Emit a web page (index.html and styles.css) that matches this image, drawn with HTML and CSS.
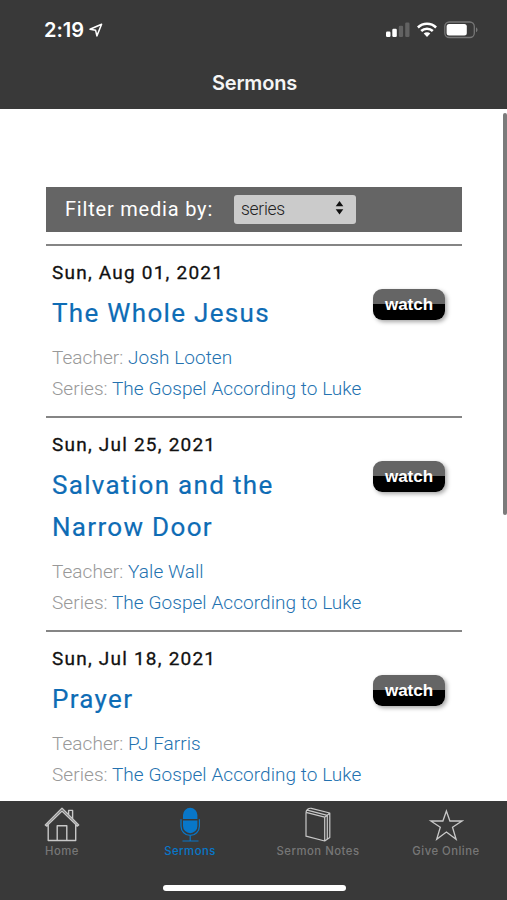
FILE: index.html
```html
<!DOCTYPE html>
<html lang="en">
<head>
<meta charset="utf-8">
<title>Sermons</title>
<link rel="stylesheet" href="styles.css">
</head>
<body>
<div class="app">
  <header class="header">
    <div class="status">
      <div class="clock"><span class="time">2:19</span>
        <svg class="location" width="14" height="14" viewBox="0 0 14 14"><path d="M12.6 1.2 1 6.3 6.6 7.3 7.9 12.9Z" fill="none" stroke="#fff" stroke-width="1.5" stroke-linejoin="round"/></svg>
      </div>
      <div class="indicators">
        <svg width="24" height="16" viewBox="0 0 24 16"><g fill="#fff"><rect x="0" y="9.5" width="4.5" height="5.5" rx="1.2"/><rect x="6.3" y="6.8" width="4.5" height="8.2" rx="1.2"/></g><g fill="#626262"><rect x="12.8" y="3.7" width="4.3" height="11.3" rx="1.2"/><rect x="19.2" y="0.6" width="4.3" height="14.4" rx="1.2"/></g></svg>
        <svg width="20" height="16" viewBox="0 0 20 16"><g fill="none" stroke="#fff" stroke-width="2.5"><path d="M.9 5.5a13 13 0 0 1 18.2 0"/><path d="M4.2 9a8.3 8.3 0 0 1 11.6 0"/></g><path d="M6.7 11.6a4.7 4.7 0 0 1 6.6 0L10 15Z" fill="#fff"/></svg>
        <svg width="34" height="18" viewBox="0 0 34 18"><rect x=".8" y="1" width="29.5" height="15.5" rx="4.5" fill="none" stroke="#777" stroke-width="1.3"/><rect x="2.6" y="3" width="20.2" height="11.6" rx="2.5" fill="#fff"/><path d="M32 6.5c2 .7 2 4 0 4.7Z" fill="#777"/></svg>
      </div>
    </div>
    <h1 class="page-title">Sermons</h1>
  </header>
  <main class="content">
    <div class="filter">
      <span class="filter-label">Filter media by:</span>
      <div class="select"><span class="select-value">series</span>
        <svg width="9" height="14" viewBox="0 0 9 14"><path d="M4.5 0 8.3 5.3H.7ZM4.5 13.5.7 8.2h7.6Z" fill="#111"/></svg>
      </div>
    </div>
    <article class="sermon">
      <div class="details">
        <p class="date">Sun, Aug 01, 2021</p>
        <h2 class="title">The Whole Jesus</h2>
        <p class="meta">Teacher: <a>Josh Looten</a></p>
        <p class="meta">Series: <a class="series">The Gospel According to Luke</a></p>
      </div>
      <button class="watch">watch</button>
    </article>
    <article class="sermon">
      <div class="details">
        <p class="date">Sun, Jul 25, 2021</p>
        <h2 class="title">Salvation and the<br>Narrow Door</h2>
        <p class="meta">Teacher: <a>Yale Wall</a></p>
        <p class="meta">Series: <a class="series">The Gospel According to Luke</a></p>
      </div>
      <button class="watch">watch</button>
    </article>
    <article class="sermon">
      <div class="details">
        <p class="date">Sun, Jul 18, 2021</p>
        <h2 class="title">Prayer</h2>
        <p class="meta">Teacher: <a>PJ Farris</a></p>
        <p class="meta">Series: <a class="series">The Gospel According to Luke</a></p>
      </div>
      <button class="watch">watch</button>
    </article>
    <div class="scrollbar"></div>
  </main>
  <footer class="footer">
    <nav class="tabs">
      <a class="tab">
        <svg width="36" height="36" viewBox="0 0 36 36" fill="none" stroke="#c8c8c8" stroke-width="1.4" stroke-linejoin="round"><path d="M4.2 16.8V33.5H31.7V16.8M18 1.2 1.3 17.9 2.6 19 18 3.9 33.4 19 34.7 17.9ZM13.2 33.3V18.7H22.8V33.3M24.6 7.4V3.4h4v8"/></svg>
        <span>Home</span>
      </a>
      <a class="tab active">
        <svg width="36" height="36" viewBox="0 0 36 36"><path d="M11 12V8a7.2 7.2 0 0 1 14.4 0v4ZM11 13.5H25.4V19a7.2 7.2 0 0 1-14.4 0Z" fill="#0877c9"/><path d="M9 12.2v7a9.2 9.2 0 0 0 18.4 0v-7M18.2 28.5v5.2M10.5 34h16" fill="none" stroke="#0877c9" stroke-width="1.2"/></svg>
        <span>Sermons</span>
      </a>
      <a class="tab">
        <svg width="36" height="36" viewBox="0 0 36 36" fill="none" stroke="#c8c8c8" stroke-width="1.2" stroke-linejoin="round"><path d="M6 5.4 24.7 10.2V34L6 29.2ZM6 5.4C6.2 2.7 8.5 1 11.3 1.3L29.8 6V30.5L24.7 34M7.3 3.2 27.3 8.3V32.2M24.7 10.2l2.6-1.9L29.8 6"/></svg>
        <span>Sermon Notes</span>
      </a>
      <a class="tab">
        <svg width="36" height="36" viewBox="0 0 36 36" fill="none" stroke="#c8c8c8" stroke-width="1.3"><path d="M18.4 4 21.9 14H34L24.5 20.3 28.1 32.2 18.4 25 8.7 32.2 12.3 20.3 2.8 14H14.9Z"/></svg>
        <span>Give Online</span>
      </a>
    </nav>
    <div class="home-indicator"></div>
  </footer>
</div>
</body>
</html>
```

FILE: styles.css
```css
* { box-sizing: border-box; }
body { margin: 0; background: #fff; }
h1, h2, p { margin: 0; font-weight: 400; }
.app { width: 507px; height: 900px; display: flex; flex-direction: column; overflow: hidden; font-family: Roboto, sans-serif; }
.header { height: 109px; flex: none; background: #393939; color: #fff; }
.status { height: 60px; padding: 0 29px 0 44px; display: flex; align-items: center; justify-content: space-between; font-family: Inter, sans-serif; }
.clock { display: flex; align-items: center; gap: 5px; }
.time { font-size: 20px; font-weight: 600; letter-spacing: -.05px; }
.indicators { display: flex; align-items: center; gap: 7px; }
.page-title { padding-left: 2px; font: 600 20px/46px Inter, sans-serif; letter-spacing: -.2px; text-align: center; color: #f5f5f5; }
.content { flex: 1; min-height: 0; overflow: hidden; padding: 78px 45px 0 46px; position: relative; }
.filter { height: 45px; margin-bottom: 12px; background: #656565; display: flex; align-items: center; padding-left: 19px; }
.filter-label { width: 169px; font-size: 20px; line-height: 24px; margin-bottom: 1px; letter-spacing: .8px; color: #fff; white-space: nowrap; }
.select { width: 122px; height: 29px; border-radius: 3px; background: #cbcbcb; display: flex; align-items: center; justify-content: space-between; padding: 0 12px 0 7px; }
.select-value { font-size: 17.5px; font-weight: 300; letter-spacing: -.3px; color: #222; margin-bottom: 2px; }
.select svg { margin-bottom: 3px; }
.sermon { border-top: 2px solid #858585; padding: 6px 17px 12px 6px; display: flex; justify-content: space-between; align-items: flex-start; }
.details { white-space: nowrap; }
.date { height: 40px; font-size: 19px; line-height: 41px; letter-spacing: 1.22px; color: #111; -webkit-text-stroke: .3px #111; }
.title { font-size: 26px; line-height: 42px; letter-spacing: 1.32px; color: #0e6cb5; -webkit-text-stroke: .2px #0e6cb5; margin-bottom: 8px; }
.meta { font-size: 19px; font-weight: 300; line-height: 31px; letter-spacing: .06px; color: #999; }
.meta a { color: #2472b0; }
.watch { width: 72px; height: 31px; margin-top: 37px; padding: 0; border: 0; border-radius: 9px; background: linear-gradient(#656565 0 48%, #000 50%); box-shadow: 2px 2px 4px rgba(0,0,0,.35); color: #fff; font: 700 17px/31px "Liberation Sans", Arial, sans-serif; }
.scrollbar { position: absolute; right: 0; top: 4px; width: 4px; height: 402px; border-radius: 2px; background: #7b7b7b; }
.footer { height: 99px; flex: none; background: #393939; }
.tabs { display: grid; grid-template-columns: repeat(4, 128px); justify-content: center; height: 84px; padding: 6px 0 0 1px; }
.tab { display: flex; flex-direction: column; align-items: center; font: 500 11.3px/16px Inter, sans-serif; letter-spacing: .5px; color: #777; white-space: nowrap; }
.active { color: #0877c9; }
.home-indicator { width: 183px; height: 6px; border-radius: 3px; background: #fff; margin: 0 0 0 163px; }
```
